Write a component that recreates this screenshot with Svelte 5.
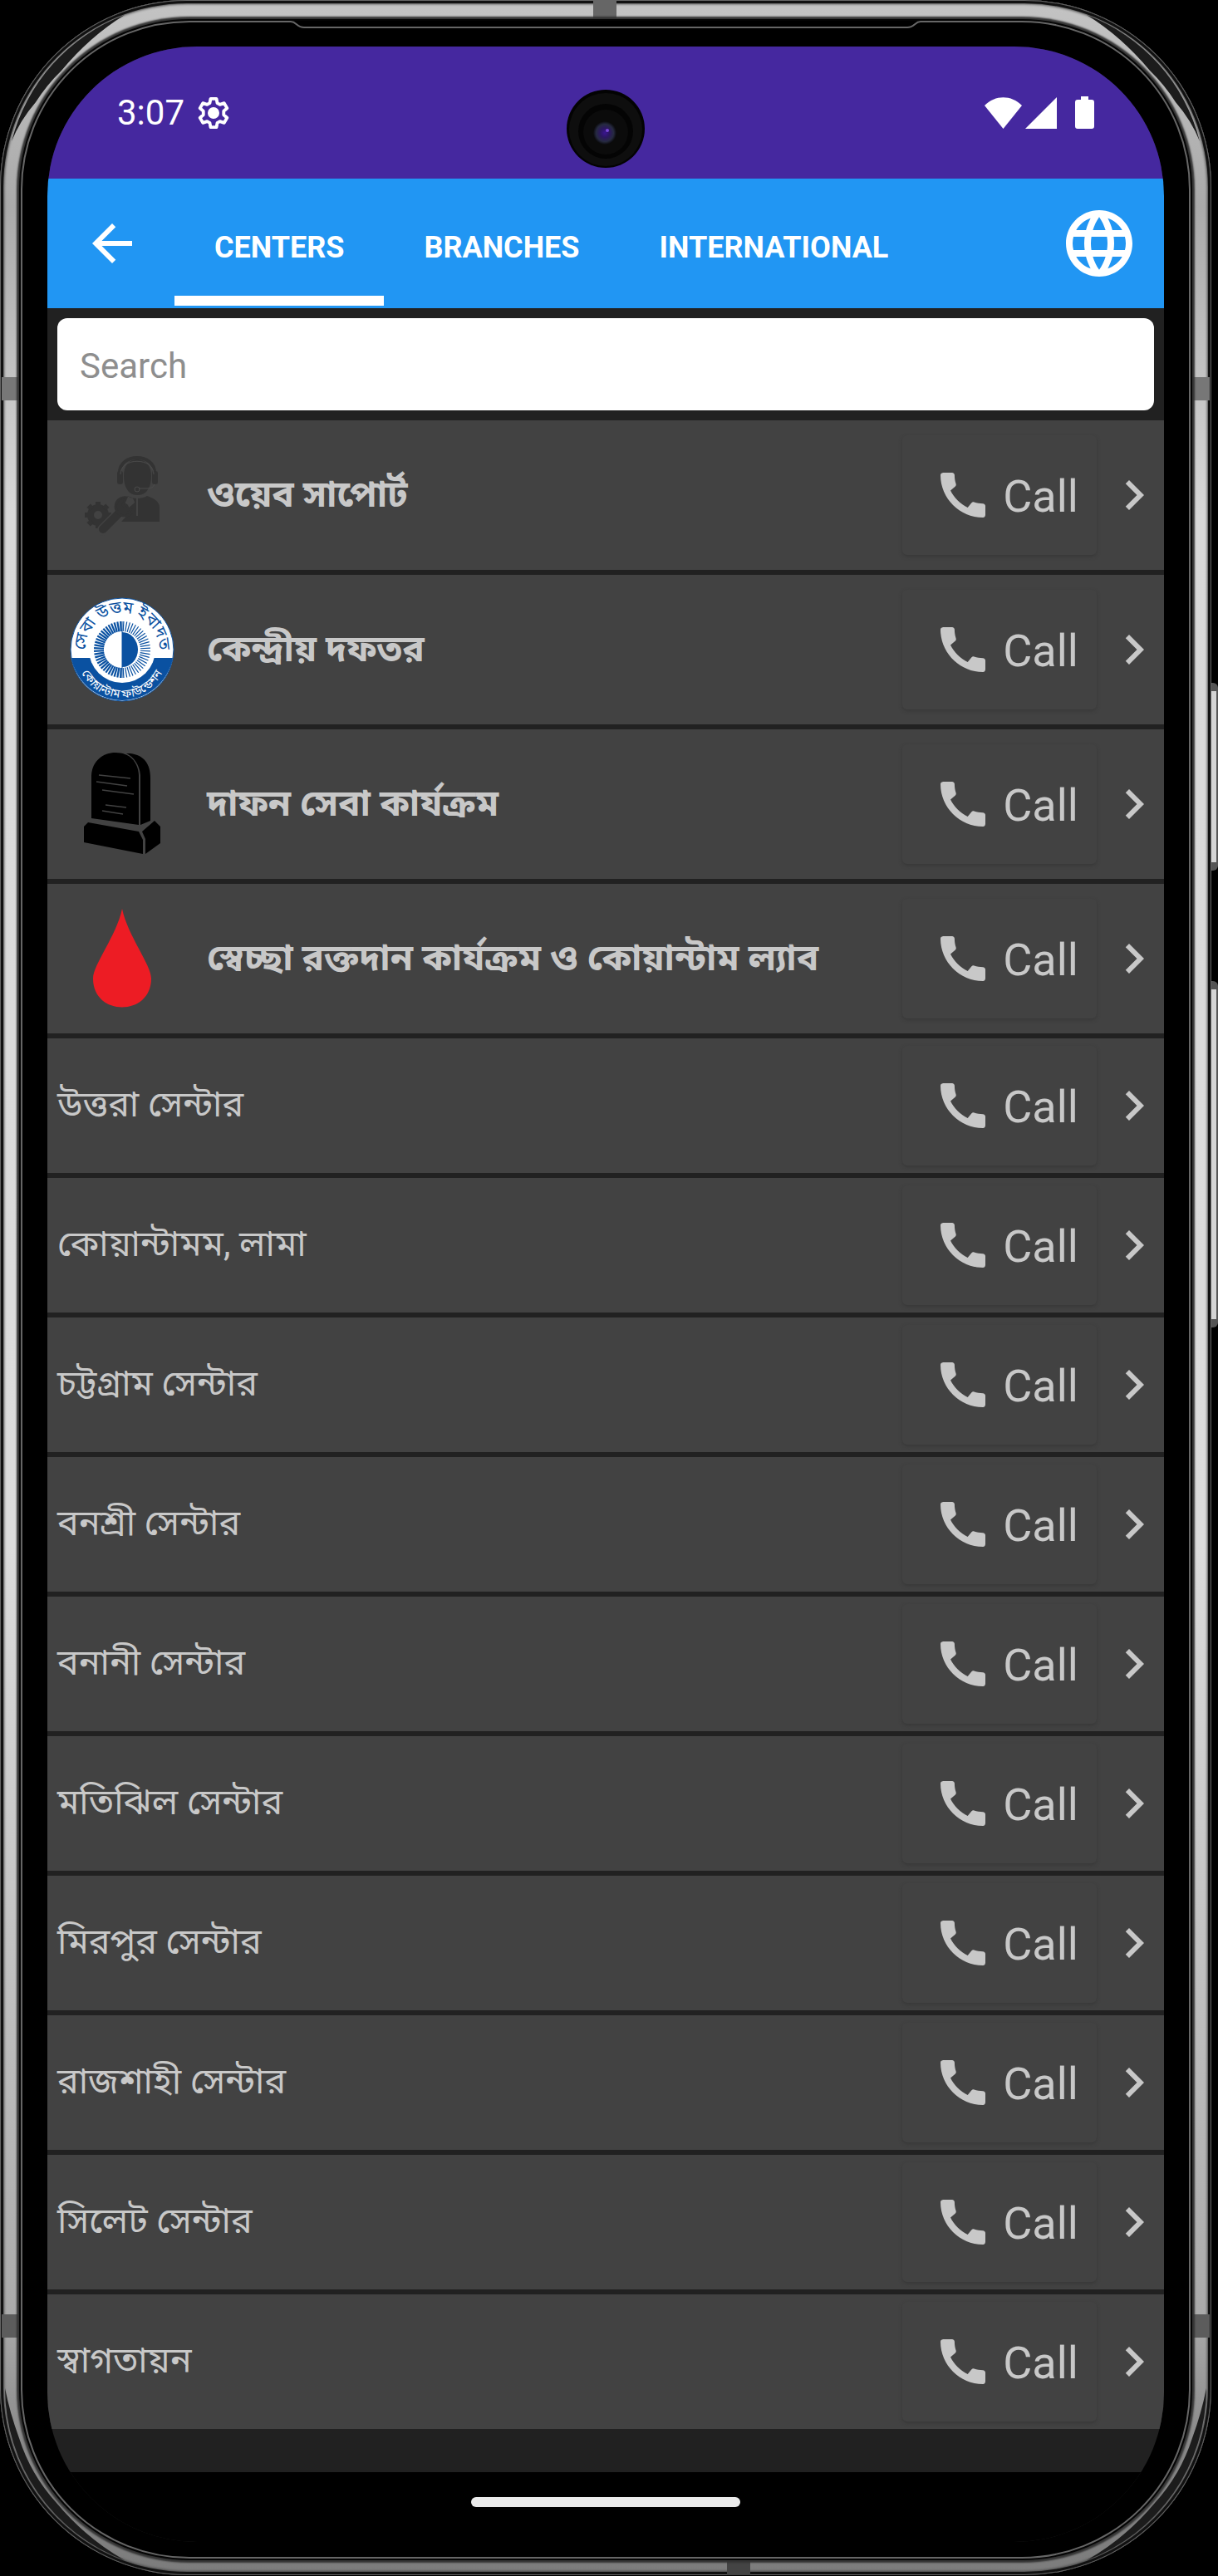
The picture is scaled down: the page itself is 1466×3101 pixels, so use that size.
<script lang="ts">
	interface Center {
		name: string;
		icon?: 'support' | 'logo' | 'grave' | 'blood';
	}

	const tabs = ['CENTERS', 'BRANCHES', 'INTERNATIONAL'];
	let activeTab = $state('CENTERS');
	let query = $state('');

	const centers: Center[] = [
		{ name: 'ওয়েব সাপোর্ট', icon: 'support' },
		{ name: 'কেন্দ্রীয় দফতর', icon: 'logo' },
		{ name: 'দাফন সেবা কার্যক্রম', icon: 'grave' },
		{ name: 'স্বেচ্ছা রক্তদান কার্যক্রম ও কোয়ান্টাম ল্যাব', icon: 'blood' },
		{ name: 'উত্তরা সেন্টার' },
		{ name: 'কোয়ান্টামম, লামা' },
		{ name: 'চট্টগ্রাম সেন্টার' },
		{ name: 'বনশ্রী সেন্টার' },
		{ name: 'বনানী সেন্টার' },
		{ name: 'মতিঝিল সেন্টার' },
		{ name: 'মিরপুর সেন্টার' },
		{ name: 'রাজশাহী সেন্টার' },
		{ name: 'সিলেট সেন্টার' },
		{ name: 'স্বাগতায়ন' }
	];

	const visible = $derived(centers.filter((c) => c.name.includes(query.trim())));

	// Sun rays of the foundation logo
	const rays = Array.from({ length: 56 }, (_, i) => (i + 0.5) * (360 / 56));
	const teeth = [0, 45, 90, 135, 180, 225, 270, 315];

	// Unlit part of the metal frame in the upper and lower corners
	const upperShade = 'M14 170A220 220 0 0 1 150 18Q108 44 74 85A208 208 0 0 0 43 123Q24 145 14 170Z';
	const lowerShade = 'M6 225A221 221 0 0 1 150 18Q104 44 68 87A210 210 0 0 0 23 165Q12 195 6 225Z';
</script>

{#snippet corner(place: string, shade: string)}
	<svg class="corner {place}" viewBox="0 0 232 232" aria-hidden="true">
		<path d={shade} fill="#1c1c1c" />
	</svg>
{/snippet}

<div class="phone">
	{@render corner('tl', upperShade)}
	{@render corner('tr', upperShade)}
	{@render corner('bl', lowerShade)}
	{@render corner('br', lowerShade)}
	<i class="band top"></i>
	<i class="band bottom"></i>
	<i class="band left upper"></i>
	<i class="band left lower"></i>
	<i class="band right upper"></i>
	<i class="band right lower"></i>
	<i class="side-key power"></i>
	<i class="side-key volume"></i>

	<div class="bezel">
		<div class="earpiece">
			<svg viewBox="0 0 16 10" aria-hidden="true"><path d="M0 1C7 1 7 8 16 8" /></svg>
			<span></span>
			<svg viewBox="0 0 16 10" aria-hidden="true"><path d="M16 1C9 1 9 8 0 8" /></svg>
		</div>

		<div class="screen">
			<div class="status">
				<span class="clock">3:07</span>
				<svg class="gear" viewBox="0 0 24 24" aria-hidden="true">
					<path d="M10 2.2h4l.6 3 1.8 1 2.9-1 2 3.5-2.3 2v2.6l2.3 2-2 3.5-2.9-1-1.8 1-.6 3h-4l-.6-3-1.8-1-2.9 1-2-3.5 2.3-2v-2.6l-2.3-2 2-3.5 2.9 1 1.8-1z" fill="none" stroke="#fff" stroke-width="2.2" stroke-linejoin="round" />
					<circle cx="12" cy="12" r="4" fill="#fff" />
				</svg>
				<svg class="wifi" viewBox="0 0 45 38" aria-hidden="true"><path d="M0 10C13-3 32-3 45 10L22.500 38z" /></svg>
				<svg class="signal" viewBox="0 0 38 38" aria-hidden="true"><path d="M38 0v38H0z" /></svg>
				<svg class="battery" viewBox="0 0 23 39" aria-hidden="true">
					<path d="M7 0h9v4h4q3 0 3 3v29q0 3-3 3H3q-3 0-3-3V7q0-3 3-3h4z" />
				</svg>
			</div>

			<header>
				<button class="back" aria-label="Back">
					<svg viewBox="0 0 24 24" aria-hidden="true">
						<path d="M20 11H7.830l5.590-5.590L12 4l-8 8 8 8 1.410-1.410L7.830 13H20z" />
					</svg>
				</button>
				<nav>
					{#each tabs as tab}
						<button class="tab" class:active={tab === activeTab} onclick={() => (activeTab = tab)}>{tab}</button>
					{/each}
				</nav>
				<button class="globe" aria-label="Language">
					<svg viewBox="0 0 24 24" aria-hidden="true">
						<path d="M11.990 2C6.470 2 2 6.480 2 12s4.470 10 9.990 10C17.520 22 22 17.520 22 12S17.520 2 11.990 2zm6.930 6h-2.950c-.32-1.250-.78-2.450-1.380-3.560 1.840.63 3.370 1.910 4.330 3.560zM12 4.040c.83 1.200 1.480 2.530 1.910 3.960h-3.820c.43-1.430 1.080-2.760 1.910-3.960zM4.260 14C4.100 13.360 4 12.690 4 12s.1-1.360.26-2h3.380c-.08.66-.14 1.320-.14 2s.06 1.340.14 2H4.260zm.82 2h2.950c.32 1.250.78 2.450 1.380 3.560-1.840-.63-3.370-1.900-4.330-3.560zm2.950-8H5.080c.96-1.660 2.490-2.930 4.330-3.560C8.810 5.550 8.350 6.750 8.030 8zM12 19.960c-.83-1.200-1.480-2.530-1.910-3.960h3.820c-.43 1.430-1.080 2.760-1.910 3.960zM14.340 14H9.660c-.09-.66-.16-1.320-.16-2s.07-1.350.16-2h4.680c.09.65.16 1.320.16 2s-.07 1.340-.16 2zm.25 5.560c.6-1.110 1.060-2.310 1.380-3.560h2.950c-.96 1.650-2.490 2.930-4.330 3.560zM16.360 14c.08-.66.14-1.320.14-2s-.06-1.340-.14-2h3.380c.16.64.26 1.310.26 2s-.1 1.360-.26 2h-3.380z" />
					</svg>
				</button>
			</header>

			<div class="search">
				<input type="text" placeholder="Search" aria-label="Search" bind:value={query} />
			</div>

			<ul>
				{#each visible as center}
					<li class:featured={center.icon}>
						{#if center.icon}
							<svg class="picture" viewBox="0 0 126 126" aria-hidden="true">
								{#if center.icon === 'support'}
									<g fill="#333">
										<path d="M65 40c0-13 6-20 16-20s17 7 17 20c0 10-3 16-7 20-5 4-14 4-19 0-4-4-7-10-7-20z" />
										<path d="M60 40V36c0-24 42-24 42 0v4" fill="none" stroke="#333" stroke-width="4" />
										<rect x="57" y="34" width="7" height="16" rx="3" />
										<rect x="99" y="34" width="7" height="16" rx="3" />
										<path d="M69 64c5 4 19 4 24 0 9 3 15 7 15 14v17H62l14-15c3-5 3-9-1-14z" />
										<circle cx="34" cy="87" r="9" fill="none" stroke="#333" stroke-width="8" />
										{#each teeth as angle}
											<rect x="31" y="71" width="6" height="6" transform="rotate({angle} 34 87)" />
										{/each}
										<path d="M40 105L66 79" stroke="#424242" stroke-width="14" stroke-linecap="round" />
										<path d="M40 104L66 78" stroke="#333" stroke-width="10" stroke-linecap="round" />
										<path d="M68 66a11 11 0 1 0 9 9l-7 6-6-6z" stroke="#333" stroke-width="3" />
									</g>
									<path d="M61 38c0-21 40-21 40 0M102 50q-2 5-8 5H83" fill="none" stroke="#4b4b4b" stroke-width="1" />
									<circle cx="81" cy="56" r="3" fill="none" stroke="#4b4b4b" />
									<path d="M81 66v22" stroke="#424242" stroke-width="2" />
								{:else if center.icon === 'logo'}
									<circle cx="63" cy="63" r="62" fill="#fff" />
									<path d="M2 73a62 62 0 0 0 122 0z" fill="#0a51a1" />
									<circle cx="63" cy="63" r="62" fill="none" stroke="#0a51a1" stroke-width="1" />
									<circle cx="63" cy="63" r="40" fill="#fff" />
									{#each rays as angle}
										<path d="M63 29v12" stroke="#0a51a1" stroke-width={angle > 180 ? 2.2 : 1.2} transform="rotate({angle} 63 63)" />
									{/each}
									<path d="M63 42a19 21 0 0 1 0 42z" fill="#0a51a1" />
									<path d="M63 29v68" stroke="#0a51a1" stroke-width="1" />
									<path id="arc-top" d="M20 72A44 44 0 1 1 106 72" fill="none" />
									<path id="arc-bottom" d="M8 70A55 55 0 0 0 118 70" fill="none" />
									<path id="arc-bottom-text" d="M9 67A54 54 0 0 0 117 67" fill="none" />
									<text class="motto" fill="#0a51a1">
										<textPath href="#arc-top" startOffset="50%" text-anchor="middle">সেবা উত্তম ইবাদত</textPath>
									</text>
									<text class="motto small" fill="#fff">
										<textPath href="#arc-bottom-text" startOffset="50%" text-anchor="middle">কোয়ান্টাম ফাউন্ডেশন</textPath>
									</text>
								{:else if center.icon === 'grave'}
									<path d="M68 2h5c16 2 24 12 24 30v51L85 88V28C84 16 77 6 68 2z" />
									<path d="M26 80V28C27 11 40 1 55 1c17 0 27 11 28 27v60z" />
									<path d="M22 85l61 11 5 10v17L17 109V90z" />
									<path d="M87 96l15-13 7 7v20L91 123V105z" />
									<path d="M35 28l38 4M32 36l37 5M39 46l38 5M43 64l25 3M39 71l25 4" stroke="#424242" stroke-width="1.500" />
								{:else}
									<path d="M63 3C56 36 28 70 28 87c0 46 70 46 70 0C98 70 70 36 63 3z" fill="#ed1c24" />
								{/if}
							</svg>
						{/if}
						<span class="name">{center.name}</span>
						<button class="call">
							<svg viewBox="0 0 24 24" aria-hidden="true">
								<path d="M20.010 15.380c-1.230 0-2.420-.2-3.530-.56-.35-.12-.74-.03-1.010.24l-1.570 1.970c-2.830-1.350-5.480-3.900-6.890-6.830l1.950-1.660c.27-.28.35-.67.24-1.020-.37-1.110-.56-2.300-.56-3.530 0-.54-.45-.99-.99-.99H4.190C3.650 3 3 3.240 3 3.990 3 13.280 10.730 21 20.010 21c.71 0 .99-.63.99-1.180v-3.450c0-.54-.45-.99-.99-.99z" />
							</svg>
							<span>Call</span>
						</button>
						<svg class="chevron" viewBox="0 0 24 24" aria-hidden="true">
							<path d="M10 6L8.590 7.410 13.170 12l-4.580 4.590L10 18l6-6z" />
						</svg>
					</li>
				{/each}
			</ul>

			<div class="home"><span></span></div>
		</div>

		<svg class="camera" viewBox="0 0 94 94" aria-hidden="true">
			<defs>
				<radialGradient id="lens">
					<stop offset="0" stop-color="#3a1590" />
					<stop offset=".4" stop-color="#2b1760" />
					<stop offset=".75" stop-color="#262a40" />
					<stop offset="1" stop-color="#0a0a0c" />
				</radialGradient>
			</defs>
			<circle cx="47" cy="47" r="47" fill="#030303" />
			<circle cx="47" cy="48" r="44" fill="#0e0e0e" />
			<circle cx="47" cy="50" r="33" fill="#040404" />
			<circle cx="47" cy="51" r="27" fill="#0b0b0b" />
			<circle cx="46" cy="52" r="14" fill="url(#lens)" />
			<circle cx="49" cy="49" r="2" fill="#7a48d8" />
		</svg>
	</div>
</div>

<style>
	:global(body) {
		margin: 0;
		background: #000;
	}

	.phone {
		position: relative;
		box-sizing: border-box;
		margin-right: 8px;
		padding: 25px 25px 20px;
		border-radius: 225px;
		background: linear-gradient(#c4c4c4, #aaa 8%, #d8d8d8 20%, #dcdcdc 60%, #aaa 90%, #888 95%, #7c7c7c);
		box-shadow:
			inset 0 0 0 1px #666,
			inset 0 0 0 4px #111,
			inset 0 0 3px 5px #444;
	}

	.bezel {
		position: relative;
		padding: 29px 30px 18px;
		border: 2px solid #666;
		border-radius: 203px;
		background: #000;
		box-shadow:
			0 0 0 2px #050505,
			0 0 2px 5px #333;
	}

	.corner {
		position: absolute;
		width: 232px;
		height: 232px;
	}

	.tl {
		top: 0;
		left: 0;
	}

	.tr {
		top: 0;
		right: 0;
		transform: scaleX(-1);
	}

	.bl {
		bottom: 0;
		left: 0;
		transform: scaleY(-1);
	}

	.br {
		bottom: 0;
		right: 0;
		transform: scale(-1);
	}

	.band {
		position: absolute;
		background: #666;
	}

	.band.top,
	.band.bottom {
		width: 28px;
		height: 22px;
	}

	.band.top {
		top: 1px;
		left: 49%;
	}

	.band.bottom {
		bottom: 0;
		left: 60%;
		background: #444;
	}

	.band.left,
	.band.right {
		width: 21px;
		height: 28px;
	}

	.band.left {
		left: 2px;
	}

	.band.right {
		right: 2px;
	}

	.band.upper {
		top: 454px;
		background: #777;
	}

	.band.lower {
		bottom: 286px;
		background: #5c5c5c;
	}

	.side-key {
		position: absolute;
		right: -8px;
		box-sizing: border-box;
		width: 8px;
		border: solid #555;
		border-width: 10px 2px 10px 0;
		border-radius: 0 6px 6px 0;
		background: #d4d4d4;
	}

	.power {
		top: 822px;
		height: 226px;
	}

	.volume {
		top: 1181px;
		height: 417px;
	}

	/* The glass steps down a little around the earpiece */
	.earpiece {
		position: absolute;
		top: -2px;
		left: 23%;
		right: 23%;
		display: flex;
		height: 10px;
		background: #000;
	}

	.earpiece svg {
		width: 16px;
		fill: none;
		stroke: #666;
		stroke-width: 2;
	}

	.earpiece span {
		flex: 1;
		margin-bottom: 1px;
		border-bottom: 2px solid #666;
	}

	.screen {
		overflow: hidden;
		border-radius: 180px;
		background: #212121;
		font-family: Roboto, 'Noto Sans Bengali', 'Noto Sans', sans-serif;
	}

	.camera {
		position: absolute;
		top: 81px;
		left: 50%;
		width: 94px;
		height: 94px;
		margin-left: -47px;
	}

	button {
		padding: 0;
		border: 0;
		background: none;
		color: inherit;
		font: inherit;
	}

	.status {
		display: flex;
		align-items: center;
		box-sizing: border-box;
		height: 159px;
		padding: 0 84px;
		background: #45289f;
		color: #fff;
		fill: #fff;
	}

	.clock {
		font-size: 42px;
	}

	.gear {
		width: 42px;
		height: 42px;
		margin: 0 auto 0 14px;
	}

	.wifi {
		width: 45px;
		height: 38px;
	}

	.signal {
		width: 38px;
		height: 38px;
		margin: 0 22px 0 4px;
	}

	.battery {
		width: 23px;
		height: 39px;
	}

	header {
		display: flex;
		align-items: center;
		height: 156px;
		background: #2196f3;
		color: #fff;
		fill: #fff;
	}

	.back {
		width: 153px;
	}

	.back svg {
		display: block;
		width: 72px;
		height: 72px;
		margin-left: 42px;
	}

	nav {
		display: flex;
		flex: 1;
		align-self: stretch;
	}

	.tab {
		margin-bottom: 3px;
		padding: 24px 48px 0;
		border-bottom: 12px solid transparent;
		font-size: 36px;
		font-weight: 700;
	}

	.tab.active {
		border-color: #fff;
	}

	.globe svg {
		display: block;
		width: 96px;
		height: 96px;
		margin-right: 30px;
	}

	.search {
		padding: 12px;
	}

	input {
		display: block;
		box-sizing: border-box;
		width: 100%;
		height: 111px;
		padding: 4px 28px 0 27px;
		border: 0;
		border-radius: 12px;
		background: #fff;
		color: #212121;
		font: 42px Roboto, 'Noto Sans Bengali', sans-serif;
	}

	input::placeholder {
		color: #8e8e8e;
		opacity: 1;
	}

	ul {
		display: flex;
		flex-direction: column;
		gap: 6px;
		margin: 0;
		padding: 0 0 52px;
		list-style: none;
	}

	li {
		display: flex;
		align-items: center;
		height: 162px;
		padding-left: 12px;
		background: #424242;
		color: #c8c8c8;
		fill: #c8c8c8;
	}

	.featured {
		height: 180px;
		padding-left: 27px;
	}

	.picture {
		width: 126px;
		height: 126px;
		margin-right: 39px;
		fill: #000;
	}

	.motto {
		font-size: 20px;
	}

	.motto.small {
		font-size: 14px;
	}

	.name {
		flex: 1;
		padding-top: 4px;
		font-size: 43px;
	}

	.featured .name {
		font-size: 44px;
		font-weight: 700;
	}

	.call {
		display: flex;
		align-items: center;
		gap: 12px;
		height: 144px;
		margin-right: 9px;
		padding: 0 22px 0 37px;
		border-radius: 6px;
		box-shadow: 0 2px 4px #383838;
		font-size: 54px;
	}

	.call span {
		padding-top: 3px;
	}

	.call svg,
	.chevron {
		width: 72px;
		height: 72px;
	}

	.home {
		display: flex;
		justify-content: center;
		height: 84px;
		background: #000;
	}

	.home span {
		width: 324px;
		height: 12px;
		margin-top: 30px;
		border-radius: 6px;
		background: #ebebeb;
	}
</style>
